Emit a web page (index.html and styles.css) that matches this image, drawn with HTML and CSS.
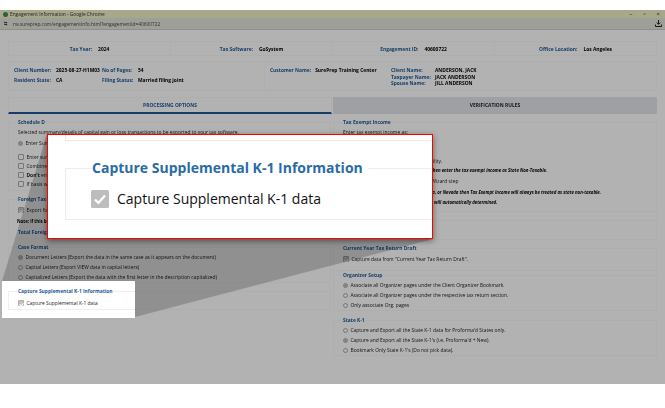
FILE: index.html
```html
<!DOCTYPE html>
<html lang="en">
<head>
<meta charset="utf-8">
<title>Engagement Information</title>
<link rel="stylesheet" href="styles.css">
</head>
<body>
<div class="stage">
  <div class="window">
    <div class="titlebar">
      <span class="logo"></span>
      <span class="title">Engagement Information - Google Chrome</span>
      <span class="controls"><span>–</span><span>▫</span><span>×</span></span>
    </div>
    <div class="urlbar">
      <span class="site-icon">⇆</span>
      <span class="url">rw.sureprep.com/engagementinfo.html?engagementId=40600722</span>
      <svg class="download" width="7" height="7" viewBox="0 0 7 7"><path d="M3.5 0v4M1.8 2.6l1.7 1.8 1.7-1.8M.5 4.5v2h6v-2" fill="none" stroke="#222" stroke-width="1"/></svg>
    </div>
    <div class="content">
      <div class="info-top">
        <div class="cell"><b class="k">Tax Year:</b><b class="v">2024</b></div>
        <div class="cell"><b class="k">Tax Software:</b><b class="v">GoSystem</b></div>
        <div class="cell"><b class="k">Engagement ID:</b><b class="v">40600722</b></div>
        <div class="cell"><b class="k">Office Location:</b><b class="v">Los Angeles</b></div>
      </div>
      <div class="info-mid">
        <div class="client-grid">
          <b class="k">Client Number:</b><b class="v">2025-08-27-H1M03</b><b class="k">No of Pages:</b><b class="v">54</b>
          <b class="k">Resident State:</b><b class="v">CA</b><b class="k">Filing Status:</b><b class="v">Married filing joint</b>
        </div>
        <div class="customer">
          <div class="cust-name"><b class="k">Customer Name:</b><b class="v">SurePrep Training Center</b></div>
          <div class="names">
            <b class="k">Client Name:</b><b class="v">ANDERSON, JACK</b>
            <b class="k">Taxpayer Name:</b><b class="v">JACK ANDERSON</b>
            <b class="k">Spouse Name:</b><b class="v">JILL ANDERSON</b>
          </div>
        </div>
      </div>
      <div class="tabs">
        <div class="tab active">PROCESSING OPTIONS</div>
        <div class="tab">VERIFICATION RULES</div>
      </div>
      <div class="columns">
        <div class="col">
          <fieldset class="box box-d">
            <legend>Schedule D</legend>
            <div class="row">Selected summary/details of capital gain or loss transactions to be exported to your tax software.</div>
            <div class="row mt1"><i class="radio on"></i>Enter Summary details</div>
            <div class="row mt4 tight"><i class="check"></i>Enter summary</div>
            <div class="row tight"><i class="check"></i>Combine</div>
            <div class="row tight"><i class="check"></i><span><b>Don't</b> enter</span></div>
            <div class="row tight"><i class="check"></i>If basis was</div>
          </fieldset>
          <fieldset class="box box-foreign">
            <legend>Foreign Tax</legend>
            <div class="row mt1"><i class="check on"></i>Export foreign tax</div>
            <div class="row mt1 note-plain"><b>Note: if this box is checked</b></div>
            <div class="row mt1 blue"><b>Total Foreign Tax</b></div>
          </fieldset>
          <fieldset class="box">
            <legend>Case Format</legend>
            <div class="row"><i class="radio on"></i>Document Letters (Export the data in the same case as it appears on the document)</div>
            <div class="row"><i class="radio"></i>Capital Letters (Export VIEW data in capital letters)</div>
            <div class="row"><i class="radio"></i>Capitalized Letters (Export the data with the first letter in the description capitalized)</div>
          </fieldset>
          <fieldset class="box box-k1">
            <legend>Capture Supplemental K-1 Information</legend>
            <div class="row mt2"><i class="check on"></i>Capture Supplemental K-1 data</div>
          </fieldset>
        </div>
        <div class="col">
          <fieldset class="box box-exempt">
            <legend>Tax Exempt Income</legend>
            <div class="row">Enter tax exempt income as:</div>
            <div class="spacer-a"></div>
            <div class="row">Enter tax exempt income as state taxability.</div>
            <div class="row note-b">If the state is not taxable then enter the tax exempt income as State Non-Taxable.</div>
            <div class="row txt-c">Ask for the state taxability in the Wizard step</div>
            <div class="row mt1 note-d">If the resident state is Texas, Florida, or Nevada then Tax Exempt Income will always be treated as state non-taxable.</div>
            <div class="row note-e">In other states the taxability will automatically determined.</div>
          </fieldset>
          <fieldset class="box box-cr">
            <legend>Other</legend>
            <div class="row mt1">Capture the data for OCR</div>
          </fieldset>
          <fieldset class="box box-draft">
            <legend>Current Year Tax Return Draft</legend>
            <div class="row mt1"><i class="check on"></i>Capture data from "Current Year Tax Return Draft".</div>
          </fieldset>
          <fieldset class="box box-flush">
            <legend>Organizer Setup</legend>
            <div class="row"><i class="radio on"></i>Associate all Organizer pages under the Client Organizer Bookmark.</div>
            <div class="row"><i class="radio"></i>Associate all Organizer pages under the respective tax return section.</div>
            <div class="row"><i class="radio"></i>Only associate Org. pages</div>
          </fieldset>
          <fieldset class="box box-state">
            <legend>State K-1</legend>
            <div class="row"><i class="radio"></i>Capture and Export all the State K-1 data for Proforma'd States only.</div>
            <div class="row"><i class="radio on"></i>Capture and Export all the State K-1's (i.e. Proforma'd + New).</div>
            <div class="row"><i class="radio"></i>Bookmark Only State K-1's (Do not pick data).</div>
          </fieldset>
        </div>
      </div>
    </div>
  </div>

  <div class="dim"></div>
  <svg class="wedge" width="665" height="408" viewBox="0 0 665 408"><polygon points="2,281 47,134 433,239 135,317 2,317" fill="#000" fill-opacity="0.19"/></svg>

  <div class="spot">
    <fieldset class="box spot-box">
      <legend>Capture Supplemental K-1 Information</legend>
      <div class="row mt2"><i class="check on"></i>Capture Supplemental K-1 data</div>
    </fieldset>
  </div>

  <div class="callout">
    <div class="callout-prev"></div>
    <fieldset class="big-box">
      <legend>Capture Supplemental K-1 Information</legend>
      <div class="big-row">
        <svg class="big-check" width="18" height="18" viewBox="0 0 18 18"><rect width="18" height="18" rx="1.5" fill="#bdbdbd"/><path d="M4 9.5l3.4 3.4L14 5.5" fill="none" stroke="#fff" stroke-width="2.2"/></svg>
        <span>Capture Supplemental K-1 data</span>
      </div>
    </fieldset>
  </div>
</div>
</body>
</html>
```
FILE: styles.css
```css
* { box-sizing: border-box; }
html, body { margin: 0; padding: 0; background: #fff; }
body { font-family: "Open Sans", "Liberation Sans", sans-serif; color: #111; overflow: hidden; }
.stage { position: relative; width: 665px; height: 408px; overflow: hidden; }

.window { position: relative; top: 10px; width: 665px; height: 374px; background: #fff; display: flex; flex-direction: column; filter: blur(0.4px); }

.titlebar { height: 8px; background: #f0efc6; display: flex; align-items: center; padding: 0 5px 0 3px; font-size: 4.8px; color: #333; }
.logo { width: 5px; height: 5px; border-radius: 50%; background: #3b8a5a; margin-right: 2px; }
.title { flex: 1; }
.controls { display: flex; gap: 11px; font-size: 6px; color: #333; }
.urlbar { height: 12px; background: #e4e4dc; display: flex; align-items: center; padding: 0 3px 0 4px; font-size: 4.8px; color: #444; border-bottom: 1px solid #cfcfc8; }
.site-icon { width: 9px; font-size: 4px; }
.url { flex: 1; }

.content { flex: 1; padding: 11px 8px 0; }
.k { color: #1d5a96; font-weight: 700; }
.v { color: #000; font-weight: 700; }

.info-top { height: 15px; border: 1px solid #fafafa; display: grid; grid-template-columns: 162px 162px 162px 1fr; font-size: 4.9px; }
.cell { display: flex; justify-content: center; align-items: center; gap: 6px; border-right: 1px solid #fafafa; }
.cell:last-child { border-right: 0; }

.info-mid { height: 30px; margin-top: 5px; border: 1px solid #fafafa; display: flex; font-size: 4.9px; }
.client-grid { width: 255px; padding: 3px 0 0 5px; display: grid; grid-template-columns: 42px 46px 36px 1fr; grid-auto-rows: 10px; align-items: center; }
.customer { flex: 1; display: flex; border-left: 1px solid #fafafa; padding: 3px 0 0 5px; }
.cust-name { width: 121px; height: 10px; display: flex; gap: 4px; align-items: center; }
.names { display: grid; grid-template-columns: 44px 1fr; grid-auto-rows: 6.7px; align-items: center; line-height: 6.7px; padding-top: 2px; }

.tabs { margin-top: 6px; height: 17px; display: grid; grid-template-columns: 325px 1fr; font-size: 4.9px; font-weight: 700; }
.tab { display: flex; align-items: center; justify-content: center; background: #e4e6ea; color: #222; height: 17px; padding-bottom: 1px; }
.tab.active { background: #fff; color: #1d5a96; border: 1px solid #fafafa; border-bottom: 2px solid #1d5a96; margin-right: 1px; }

.columns { display: grid; grid-template-columns: 325px 1fr; }
.col { display: flex; flex-direction: column; padding-top: 4px; }

.box { margin: 0 0 4px; padding: 0 0 0 9px; border: 1px solid #fafafa; min-width: 0; font-size: 4.9px; color: #222; }
.col:first-child .box { margin-right: 2px; }
.box legend { padding: 0; margin: 0; height: 9px; line-height: 9px; font-weight: 700; color: #1d5a96; font-size: 4.9px; }
.box-d { height: 73px; }
.box-foreign { height: 44px; }
.box-k1 { height: 23px; }
.box-exempt { height: 94px; }
.box-cr { height: 24px; }
.box-draft { height: 27px; margin-bottom: 0; }
.box-flush { margin-bottom: 0; }
.box-state { margin-top: 5px; }

.row { height: 10px; display: flex; align-items: center; white-space: nowrap; line-height: 6px; }
.tight { height: 9px; }
.mt1 { margin-top: 1px; }
.mt2 { margin-top: 2px; }
.mt4 { margin-top: 4.5px; }
.note-plain { font-size: 4.4px; color: #000; margin-left: -1px; }
.blue { color: #1d5a96; }
.radio { width: 5px; height: 5px; border-radius: 50%; border: 0.6px solid #aaa; background: #fff; margin-right: 2.5px; flex: none; }
.radio.on { background: radial-gradient(circle, #bbb 0 1.3px, #fff 1.5px); }
.check { width: 6px; height: 6px; border: 0.6px solid #aaa; border-radius: 1px; background: #fff; margin-right: 2.5px; flex: none; position: relative; }
.check.on { background: #c4c4c4; }
.check.on::after { content: ""; position: absolute; left: 1.2px; top: 0.5px; width: 1.6px; height: 3px; border: solid #fff; border-width: 0 0.7px 0.7px 0; transform: rotate(40deg); }

.spacer-a { height: 19px; }
.note-b, .note-d, .note-e { font-size: 4.35px; font-weight: 700; font-style: italic; color: #000; }
.note-b { height: 7px; padding-left: 35px; }
.txt-c { margin-top: 3px; padding-left: 14px; }
.note-d { padding-left: 17px; }
.note-e { padding-left: 31px; }

.dim { position: absolute; left: 0; top: 10px; width: 665px; height: 374px; background: rgba(0, 0, 0, 0.3); }
.wedge { position: absolute; left: 0; top: 0; }

.spot { position: absolute; left: 2px; top: 281px; width: 133px; height: 37px; background: #fff; overflow: hidden; padding: 6px 0 0 6px; }
.spot-box { width: 324px; height: 23px; margin: 0; border-color: #efefef; }

.callout { position: absolute; left: 47px; top: 134px; width: 386px; height: 105px; background: #fff; border: 1px solid #f00; box-shadow: 0 2px 6px rgba(0, 0, 0, 0.45); overflow: hidden; padding-left: 17px; }
.callout-prev { height: 6px; margin-right: -6px; border: 1px solid #ececec; border-top: 0; }
.big-box { margin: 17px -8px 0 0; padding: 0 0 0 25px; height: 62px; border: 1px solid #ececec; min-width: 0; }
.big-box legend { padding: 0 5px 0 0; margin-left: 1px; height: 20px; line-height: 20px; font-size: 14px; font-weight: 700; color: #2a6ba6; }
.big-row { display: flex; align-items: center; gap: 8px; margin-top: 12px; font-size: 14px; color: #111; line-height: 18px; }
.big-check { flex: none; }
```
